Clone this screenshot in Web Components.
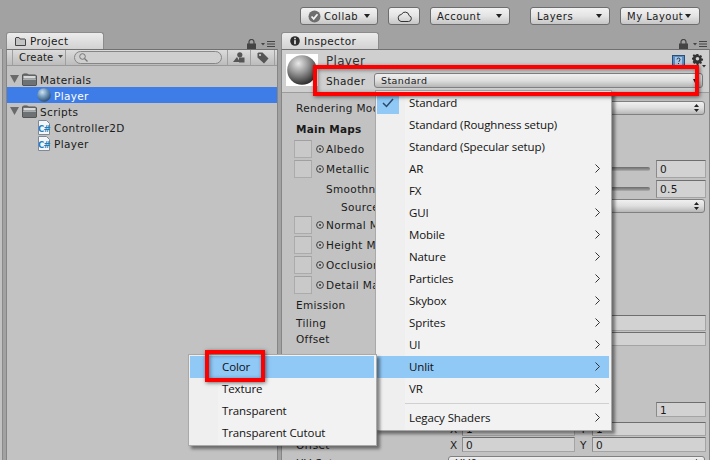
<!DOCTYPE html>
<html>
<head>
<meta charset="utf-8">
<title>Inspector</title>
<style>
  html, body { margin: 0; height: 100%; }
  body {
    width: 710px; height: 460px; overflow: hidden; position: relative;
    background: #a2a2a2; color: #1a1a1a;
    font: 10.5px "DejaVu Sans", sans-serif;
  }
</style>
</head>
<body>
<main-toolbar>
  <unity-button arrow style="width:78px"><span style="display:inline-flex;align-items:center;gap:3px;margin-left:1px"><svg width="13" height="13" viewBox="0 0 13 13"><circle cx="6.5" cy="6.5" r="6" fill="#6e6e6e"/><path d="M3.5 6.5l2.2 2.4 3.8-4.6" fill="none" stroke="#f2f2f2" stroke-width="1.8"/></svg>Collab</span></unity-button>
  <unity-button center style="width:32px"><svg width="15" height="11" viewBox="0 0 15 11"><path d="M4 10.5h7.5a3 3 0 0 0 .6-5.9 4 4 0 0 0-7.6-1.2A3.6 3.6 0 0 0 4 10.5z" fill="none" stroke="#333"/></svg></unity-button>
  <unity-button arrow style="width:80px">Account</unity-button>
  <unity-button arrow style="width:80px;margin-left:10px">Layers</unity-button>
  <unity-button arrow tight style="width:80px">My Layout</unity-button>
</main-toolbar>

<div style="display:flex;height:428px">
  <div style="width:2px;background:#c2c2c2;border-right:1px solid #8a8a8a;margin-top:17px;margin-right:3px"></div>
  <dock-panel tab="Project" icon="tabfolder" style="width:272px;margin-right:3px">
    <project-bar></project-bar>
    <div style="padding-top:5px">
      <tree-item expanded icon="folder">Materials</tree-item>
      <tree-item depth="1" icon="sphere" selected>Player</tree-item>
      <tree-item expanded icon="folder">Scripts</tree-item>
      <tree-item depth="1" icon="script">Controller2D</tree-item>
      <tree-item depth="1" icon="script">Player</tree-item>
    </div>
  </dock-panel>
  <dock-panel tab="Inspector" icon="info" style="flex:1">
    <material-header></material-header>
    <div style="padding:7px 3px 0 0;display:flex;flex-direction:column">
      <insp-row h="16" label="Rendering Mode"><unity-select></unity-select></insp-row>
      <insp-row h="16" top="5" label="Main Maps" bold></insp-row>
      <insp-row h="18" top="3" label="Albedo" tex></insp-row>
      <insp-row h="18" top="2" label="Metallic" tex><unity-slider></unity-slider><unity-field style="width:50px">0</unity-field></insp-row>
      <insp-row h="18" top="2" label="Smoothness" indent="44"><unity-slider></unity-slider><unity-field style="width:50px">0.5</unity-field></insp-row>
      <insp-row h="14" top="1" label="Source" indent="59" nudge><unity-select></unity-select></insp-row>
      <insp-row h="18" top="3" label="Normal Map" tex></insp-row>
      <insp-row h="18" top="2" label="Height Map" tex></insp-row>
      <insp-row h="18" top="2" label="Occlusion" tex></insp-row>
      <insp-row h="18" top="2" label="Detail Mask" tex></insp-row>
      <insp-row h="16" top="3" label="Emission"></insp-row>
      <insp-row h="16" top="2" label="Tiling"><unity-field style="width:258px"></unity-field></insp-row>
      <insp-row h="14" top="1" label="Offset"><unity-field style="width:258px"></unity-field></insp-row>
      <insp-row h="15" top="56"><unity-field style="width:50px">1</unity-field></insp-row>
      <insp-row h="14" top="5"><axis-pair x="1" y="1"></axis-pair></insp-row>
      <insp-row h="15" top="1" label="Offset"><axis-pair x="0" y="0"></axis-pair></insp-row>
      <insp-row h="16" top="3" label="UV Set"><unity-select text="UV0"></unity-select></insp-row>
    </div>
  </dock-panel>
</div>

<popup-menu style="left:375px;top:90px;width:237px">
  <menu-item checked>Standard</menu-item>
  <menu-item>Standard (Roughness setup)</menu-item>
  <menu-item>Standard (Specular setup)</menu-item>
  <menu-item arrow>AR</menu-item>
  <menu-item arrow>FX</menu-item>
  <menu-item arrow>GUI</menu-item>
  <menu-item arrow>Mobile</menu-item>
  <menu-item arrow>Nature</menu-item>
  <menu-item arrow>Particles</menu-item>
  <menu-item arrow>Skybox</menu-item>
  <menu-item arrow>Sprites</menu-item>
  <menu-item arrow>UI</menu-item>
  <menu-item arrow active>Unlit</menu-item>
  <menu-item arrow>VR</menu-item>
  <menu-sep></menu-sep>
  <menu-item arrow>Legacy Shaders</menu-item>
</popup-menu>

<popup-menu style="left:188px;top:354px;width:189px">
  <menu-item active>Color</menu-item>
  <menu-item>Texture</menu-item>
  <menu-item>Transparent</menu-item>
  <menu-item>Transparent Cutout</menu-item>
</popup-menu>

<red-box style="left:313px;top:65px;width:378px;height:23px"></red-box>
<red-box style="left:205px;top:350px;width:52px;height:24px"></red-box>

<script>
const ICONS = {
  folder: `<svg width="15" height="13" viewBox="0 0 15 13"><path d="M.5 12V2l1-1h4l1 1h7l1 1v9l-.5.5H1z" fill="#6d7274" stroke="#555"/><rect x="1.5" y="3" width="12" height="2.5" fill="#d8d8d8"/><rect x="1" y="6" width="13" height="1" fill="#a8acae"/></svg>`,
  tabfolder: `<svg width="11" height="9" viewBox="0 0 11 9"><path d="M.5 8.500V1l.5-.5h3l1 1.500h5l.5.5v6z" fill="#c4c4c4" stroke="#444"/></svg>`,
  sphere: `<svg width="14" height="14" viewBox="0 0 14 14"><defs><radialGradient id="b" cx=".38" cy=".3" r=".8"><stop offset="0" stop-color="#cfe2f2"/><stop offset=".45" stop-color="#6f96b8"/><stop offset="1" stop-color="#1f3f5e"/></radialGradient></defs><circle cx="7" cy="7" r="6.8" fill="url(#b)"/></svg>`,
  script: `<svg width="14" height="15" viewBox="0 0 14 15"><path d="M1.500.5h8l3 3v11h-11z" fill="#f4f6f8" stroke="#7d8a96"/><text x="7" y="11.500" text-anchor="middle" font-family="DejaVu Sans" font-weight="bold" font-size="8.500" letter-spacing="-.8" fill="#1c7fc0">C#</text></svg>`,
  info: `<svg width="10" height="10" viewBox="0 0 10 10"><circle cx="5" cy="5" r="4.800" fill="#2c2c2c"/><rect x="4.200" y="1.800" width="1.600" height="1.500" fill="#eee"/><rect x="4.200" y="4.200" width="1.600" height="4" fill="#eee"/></svg>`,
  lock: `<svg width="9" height="10" viewBox="0 0 9 10"><path d="M2 5V3a2.500 2.500 0 0 1 5 0v2" fill="none" stroke="#444" stroke-width="1.200"/><rect y="4.500" width="9" height="5.500" fill="#444"/></svg>`,
  list: `<svg width="14" height="6" viewBox="0 0 14 6"><path d="M0 2h4L2 4.500z" fill="#444"/><path d="M6 .5h8M6 3h8M6 5.500h8" stroke="#444"/></svg>`,
  arrow: `<svg width="6" height="4" viewBox="0 0 6 4"><path d="M0 0h6L3 4z" fill="#222"/></svg>`,
  updown: `<svg width="5" height="8" viewBox="0 0 5 8"><path d="M2.500 0L5 3H0zM2.500 8L0 5h5z" fill="#222"/></svg>`
};

class UnityButton extends HTMLElement {
  constructor() {
    super();
    this.attachShadow({ mode: 'open' });
    const arrow = this.hasAttribute('arrow') ? `<span class="arrow">${ICONS.arrow}</span>` : '';
    this.shadowRoot.innerHTML = `
      <style>
        :host {
          display: flex; align-items: center; box-sizing: border-box; height: 18px;
          padding: 0 7px 0 6px; border: 1px solid #6d6d6d; border-radius: 3px;
          background: linear-gradient(#f2f2f2, #e4e4e4 50%, #c6c6c6);
          white-space: nowrap;
          font-size: 10px; letter-spacing: .5px;
        }
        :host([center]) { justify-content: center; padding: 0; }
        :host([tight]) .arrow { margin-left: 2px; }
        .arrow { margin-left: auto; display: flex; }
      </style>
      <slot></slot>${arrow}
    `;
  }
}

class MainToolbar extends HTMLElement {
  constructor() {
    super();
    this.attachShadow({ mode: 'open' });
    this.shadowRoot.innerHTML = `
      <style>
        :host { display: flex; gap: 10px; height: 32px; box-sizing: border-box; padding: 7px 0 0 300px; }
      </style>
      <slot></slot>
    `;
  }
}

class DockPanel extends HTMLElement {
  constructor() {
    super();
    this.attachShadow({ mode: 'open' });
    this.shadowRoot.innerHTML = `
      <style>
        :host { display: flex; flex-direction: column; min-width: 0; }
        .strip { display: flex; height: 17px; flex: none; position: relative; }
        .tab {
          width: 98px; box-sizing: border-box; display: flex; align-items: center; gap: 4px;
          padding: 0 0 0 8px; border: 1px solid #8c8c8c; border-bottom: 0;
          border-radius: 3px 3px 0 0; background: linear-gradient(#ececec, #d2d2d2);
          letter-spacing: .35px;
        }
        .tools { margin-left: auto; display: flex; align-items: center; gap: 5px; padding: 6px 3px 0 0; }
        .body {
          flex: 1; background: #c2c2c2; border: 1px solid #868686; border-bottom: 0;
          border-top-color: #707070; overflow: hidden; display: flex; flex-direction: column;
        }
      </style>
      <div class="strip">
        <div class="tab">${ICONS[this.getAttribute('icon')]}<span>${this.getAttribute('tab')}</span></div>
        <div class="tools">${ICONS.lock}${ICONS.list}</div>
      </div>
      <div class="body"><slot></slot></div>
    `;
  }
}

class ProjectBar extends HTMLElement {
  constructor() {
    super();
    this.attachShadow({ mode: 'open' });
    this.shadowRoot.innerHTML = `
      <style>
        :host {
          display: flex; align-items: stretch; height: 16px; flex: none; box-sizing: border-box;
          background: linear-gradient(#dcdcdc, #bcbcbc); border-bottom: 1px solid #9a9a9a;
          padding-left: 5px;
        }
        .create {
          width: 54px; box-sizing: border-box; display: flex; align-items: center; gap: 5px; padding-left: 6px;
          border: solid #a0a0a0; border-width: 0 1px; font-size: 10px; letter-spacing: .2px;
        }
        .create svg { margin-top: -2px; flex: none; }
        .search {
          width: 148px; height: 13px; box-sizing: border-box; margin: 1px 5px 0 8px;
          border: 1px solid #868686; border-radius: 7px; background: #cfcfcf;
          display: flex; align-items: center; padding-left: 4px;
        }
        .tool { width: 22px; display: flex; align-items: center; justify-content: center; border-left: 1px solid #a0a0a0; }
        .tool:last-child { width: 23px; border-right: 1px solid #a0a0a0; }
      </style>
      <div class="create">Create<svg width="5" height="3" viewBox="0 0 5 3"><path d="M0 0h5L2.500 3z" fill="#444"/></svg></div>
      <div class="search"><svg width="9" height="9" viewBox="0 0 9 9"><circle cx="3.500" cy="3.500" r="2.800" fill="none" stroke="#777"/><path d="M5.500 5.500L8.500 8.500" stroke="#777" stroke-width="1.300"/></svg></div>
      <div class="tool"><svg width="12" height="11" viewBox="0 0 12 11"><path d="M0 10l4-5 3 5z" fill="#555"/><rect x="6" y="5.500" width="5.500" height="5" fill="#555"/><circle cx="6.800" cy="2.800" r="2.600" fill="#555"/></svg></div>
      <div class="tool"><svg width="12" height="12" viewBox="0 0 12 12"><path d="M.5 1.500l1-1h4l6 6-4.500 5-6.500-6z" fill="#555"/><circle cx="3" cy="3" r="1" fill="#ddd"/></svg></div>
    `;
  }
}

class TreeItem extends HTMLElement {
  constructor() {
    super();
    this.attachShadow({ mode: 'open' });
    const depth = +this.getAttribute('depth') || 0;
    const tri = this.hasAttribute('expanded')
      ? `<svg width="9" height="8" viewBox="0 0 9 8"><path d="M0 0h9L4.500 8z" fill="#6a6a6a"/></svg>` : '';
    this.shadowRoot.innerHTML = `
      <style>
        :host {
          display: flex; align-items: center; gap: 3px; height: 16px;
          padding-left: ${depth ? 30 : 3}px; letter-spacing: .35px;
        }
        :host([selected]) { background: #3e7de7; color: #fff; }
        svg { flex: none; }
        .label { padding-top: 2px; }
      </style>
      ${tri}${ICONS[this.getAttribute('icon')]}<span class="label"><slot></slot></span>
    `;
  }
}

class MaterialHeader extends HTMLElement {
  constructor() {
    super();
    this.attachShadow({ mode: 'open' });
    this.shadowRoot.innerHTML = `
      <style>
        :host {
          display: flex; height: 43px; flex: none; box-sizing: border-box; padding: 4px 3px 0 4px; gap: 8px;
          background: #cfcfcf; border-bottom: 1px solid #9c9c9c;
        }
        .thumb { width: 32px; height: 32px; background: #fff; flex: none; }
        .info { flex: 1; display: flex; flex-direction: column; min-width: 0; }
        .top { display: flex; align-items: center; height: 14px; }
        .name { font-size: 12px; color: #333; letter-spacing: .3px; }
        .top svg:first-of-type { margin-left: auto; }
        .top svg + svg { margin-left: 7px; }
        .shader { display: flex; align-items: center; height: 15px; margin-top: 5px; letter-spacing: .35px; }
        .shader span { width: 48px; flex: none; }
        unity-select { flex: 1; margin-right: 3px; }
      </style>
      <div class="thumb"><svg width="32" height="32" viewBox="0 0 32 32"><defs><radialGradient id="g" cx=".38" cy=".28" r=".8"><stop offset="0" stop-color="#e8e8e8"/><stop offset=".4" stop-color="#9a9a9a"/><stop offset="1" stop-color="#1c1c1c"/></radialGradient></defs><circle cx="16" cy="16" r="14.800" fill="url(#g)"/></svg></div>
      <div class="info">
        <div class="top">
          <span class="name">Player</span>
          <svg width="13" height="12" viewBox="0 0 13 12"><rect x=".5" y=".5" width="12" height="11" fill="#5d8fc4" stroke="#2b4f7c"/><rect x="3" y="2" width="7" height="8" fill="#a9c8e6"/><path d="M5 4.500a1.500 1.500 0 1 1 2 1.400v1" fill="none" stroke="#234" /><rect x="6" y="8" width="1" height="1" fill="#234"/></svg>
          <svg width="14" height="14" viewBox="0 0 14 14"><path d="M5.500 0h2l.3 1.600 1.200.5L10.400 1.200l1.400 1.400-.9 1.400.5 1.200 1.600.3v2l-1.600.3-.5 1.200.9 1.400-1.400 1.400-1.400-.9-1.200.5-.3 1.600h-2l-.3-1.600-1.200-.5-1.400.9L.7 9.400l.9-1.400-.5-1.200L-.4 6.500v-2l1.600-.3.5-1.200-.9-1.400L2.200 .2l1.400.9 1.200-.5z" transform="scale(.85)" fill="#333"/><circle cx="5.500" cy="4.700" r="1.800" fill="#cfcfcf"/><path d="M10 11h4l-2 2.500z" fill="#333"/></svg>
        </div>
        <div class="shader"><span>Shader</span><unity-select text="Standard" small></unity-select></div>
      </div>
    `;
  }
}

class UnitySelect extends HTMLElement {
  constructor() {
    super();
    this.attachShadow({ mode: 'open' });
    const small = this.hasAttribute('small');
    const glyph = small ? `<svg width="4" height="4" viewBox="0 0 4 4"><path d="M0 0h4L2 4z" fill="#222"/></svg>` : ICONS.updown;
    this.shadowRoot.innerHTML = `
      <style>
        :host {
          display: flex; align-items: center; justify-content: space-between; box-sizing: border-box;
          width: 257px; height: 14px; padding: 0 5px 0 6px; margin-right: 1px;
          border: 1px solid #808080; border-radius: 3px;
          background: linear-gradient(#f0f0f0, #dedede 50%, #b6b6b6);
          font-size: ${small ? 9.5 : 10.5}px; letter-spacing: ${small ? .4 : .35}px;
        }
        :host([small]) { height: 15px; width: auto; }
      </style>
      <span>${this.getAttribute('text') || ''}</span>${glyph}
    `;
  }
}

class UnitySlider extends HTMLElement {
  constructor() {
    super();
    this.attachShadow({ mode: 'open' });
    this.shadowRoot.innerHTML = `
      <style>
        :host {
          display: block; width: 180px; height: 4px; margin-right: 6px; border-radius: 2px;
          background: linear-gradient(#6c6c6c, #8e8e8e 60%, #b0b0b0);
        }
      </style>
    `;
  }
}

class UnityField extends HTMLElement {
  constructor() {
    super();
    this.attachShadow({ mode: 'open' });
    this.shadowRoot.innerHTML = `
      <style>
        :host {
          display: flex; align-items: center; box-sizing: border-box; height: 100%; padding-left: 3px;
          background: #d2d2d2; border: 1px solid #a4a4a4; border-top-color: #6e6e6e; border-left-color: #8a8a8a;
          letter-spacing: .35px;
        }
      </style>
      <slot></slot>
    `;
  }
}

class AxisPair extends HTMLElement {
  constructor() {
    super();
    this.attachShadow({ mode: 'open' });
    this.shadowRoot.innerHTML = `
      <style>
        :host { display: flex; align-items: center; height: 100%; }
        span { width: 12px; padding-left: 2px; }
        unity-field { width: 113px; }
        .y { margin-left: 4px; width: 12px; padding-left: 1px; }
        .y + unity-field { width: 114px; }
      </style>
      <span>X</span><unity-field>${this.getAttribute('x')}</unity-field>
      <span class="y">Y</span><unity-field>${this.getAttribute('y')}</unity-field>
    `;
  }
}

class InspRow extends HTMLElement {
  constructor() {
    super();
    this.attachShadow({ mode: 'open' });
    const tex = this.hasAttribute('tex');
    const indent = +this.getAttribute('indent') || 14;
    const dot = `<svg width="8" height="8" viewBox="0 0 8 8"><circle cx="4" cy="4" r="3.400" fill="none" stroke="#333" stroke-width=".9"/><circle cx="4" cy="4" r="1" fill="#333"/></svg>`;
    this.shadowRoot.innerHTML = `
      <style>
        :host {
          display: flex; align-items: center; flex: none; box-sizing: border-box; white-space: nowrap;
          height: ${this.getAttribute('h')}px; margin-top: ${this.getAttribute('top') || 0}px;
          padding-left: ${tex ? 12 : indent}px; letter-spacing: .35px;
        }
        :host([bold]) { font-weight: bold; letter-spacing: .2px; }
        :host([nudge]) .label { padding-top: 2px; }
        .thumb {
          width: 18px; height: 18px; box-sizing: border-box; flex: none; margin-right: 4px;
          background: #c9c9c9; border: 1px solid #ababab; border-top-color: #a0a0a0;
        }
        svg { margin-right: 2px; flex: none; }
        .end { margin-left: auto; display: flex; align-items: center; height: 100%; }
      </style>
      ${tex ? `<div class="thumb"></div>${dot}` : ''}
      <span class="label">${this.getAttribute('label') || ''}</span>
      <div class="end"><slot></slot></div>
    `;
  }
}

class PopupMenu extends HTMLElement {
  constructor() {
    super();
    this.attachShadow({ mode: 'open' });
    this.shadowRoot.innerHTML = `
      <style>
        :host {
          position: absolute; box-sizing: border-box; padding: 1px 2px 1px 1px;
          background: linear-gradient(90deg, #efefef 29px, #f2f2f2 29px);
          border: 1px solid #a9a9a9;
          box-shadow: 3px 3px 3px rgba(0, 0, 0, .45);
          font: 11.5px "Open Sans", "Noto Sans", sans-serif; letter-spacing: -.1px; color: #111;
        }
      </style>
      <slot></slot>
    `;
  }
}

class MenuItem extends HTMLElement {
  constructor() {
    super();
    this.attachShadow({ mode: 'open' });
    const check = this.hasAttribute('checked')
      ? `<div class="check"><svg width="12" height="10" viewBox="0 0 12 10"><path d="M1 5l3.500 3.500L11 1" fill="none" stroke="#2a4a6a" stroke-width="1.500"/></svg></div>` : '';
    const arrow = this.hasAttribute('arrow')
      ? `<svg class="more" width="5" height="9" viewBox="0 0 5 9"><path d="M.5.5l4 4-4 4" fill="none" stroke="#333"/></svg>` : '';
    this.shadowRoot.innerHTML = `
      <style>
        :host {
          display: flex; align-items: center; height: 22px; box-sizing: border-box; position: relative;
          padding: 0 0 2px 32px; white-space: nowrap;
        }
        :host([active]) { background: #90c8f6; }
        .check {
          position: absolute; left: 0; top: 0; width: 22px; height: 22px; background: #90c8f6;
          display: flex; align-items: center; justify-content: center;
        }
        .more { margin-left: auto; margin-right: 9px; }
      </style>
      ${check}<slot></slot>${arrow}
    `;
  }
}

class MenuSep extends HTMLElement {
  constructor() {
    super();
    this.attachShadow({ mode: 'open' });
    this.shadowRoot.innerHTML = `
      <style>
        :host { display: block; height: 7px; box-sizing: border-box; padding: 3px 0 0 28px; }
        div { height: 1px; background: #d0d0d0; }
      </style>
      <div></div>
    `;
  }
}

class RedBox extends HTMLElement {
  constructor() {
    super();
    this.attachShadow({ mode: 'open' });
    this.shadowRoot.innerHTML = `
      <style>
        :host {
          position: absolute; border: 4px solid #f00; pointer-events: none;
          box-shadow: 1px 1px 4px rgba(0, 0, 0, .55), inset 1px 1px 4px rgba(0, 0, 0, .45);
        }
      </style>
    `;
  }
}

customElements.define('unity-button', UnityButton);
customElements.define('main-toolbar', MainToolbar);
customElements.define('dock-panel', DockPanel);
customElements.define('project-bar', ProjectBar);
customElements.define('tree-item', TreeItem);
customElements.define('material-header', MaterialHeader);
customElements.define('unity-select', UnitySelect);
customElements.define('unity-slider', UnitySlider);
customElements.define('unity-field', UnityField);
customElements.define('axis-pair', AxisPair);
customElements.define('insp-row', InspRow);
customElements.define('popup-menu', PopupMenu);
customElements.define('menu-item', MenuItem);
customElements.define('menu-sep', MenuSep);
customElements.define('red-box', RedBox);
</script>
</body>
</html>
